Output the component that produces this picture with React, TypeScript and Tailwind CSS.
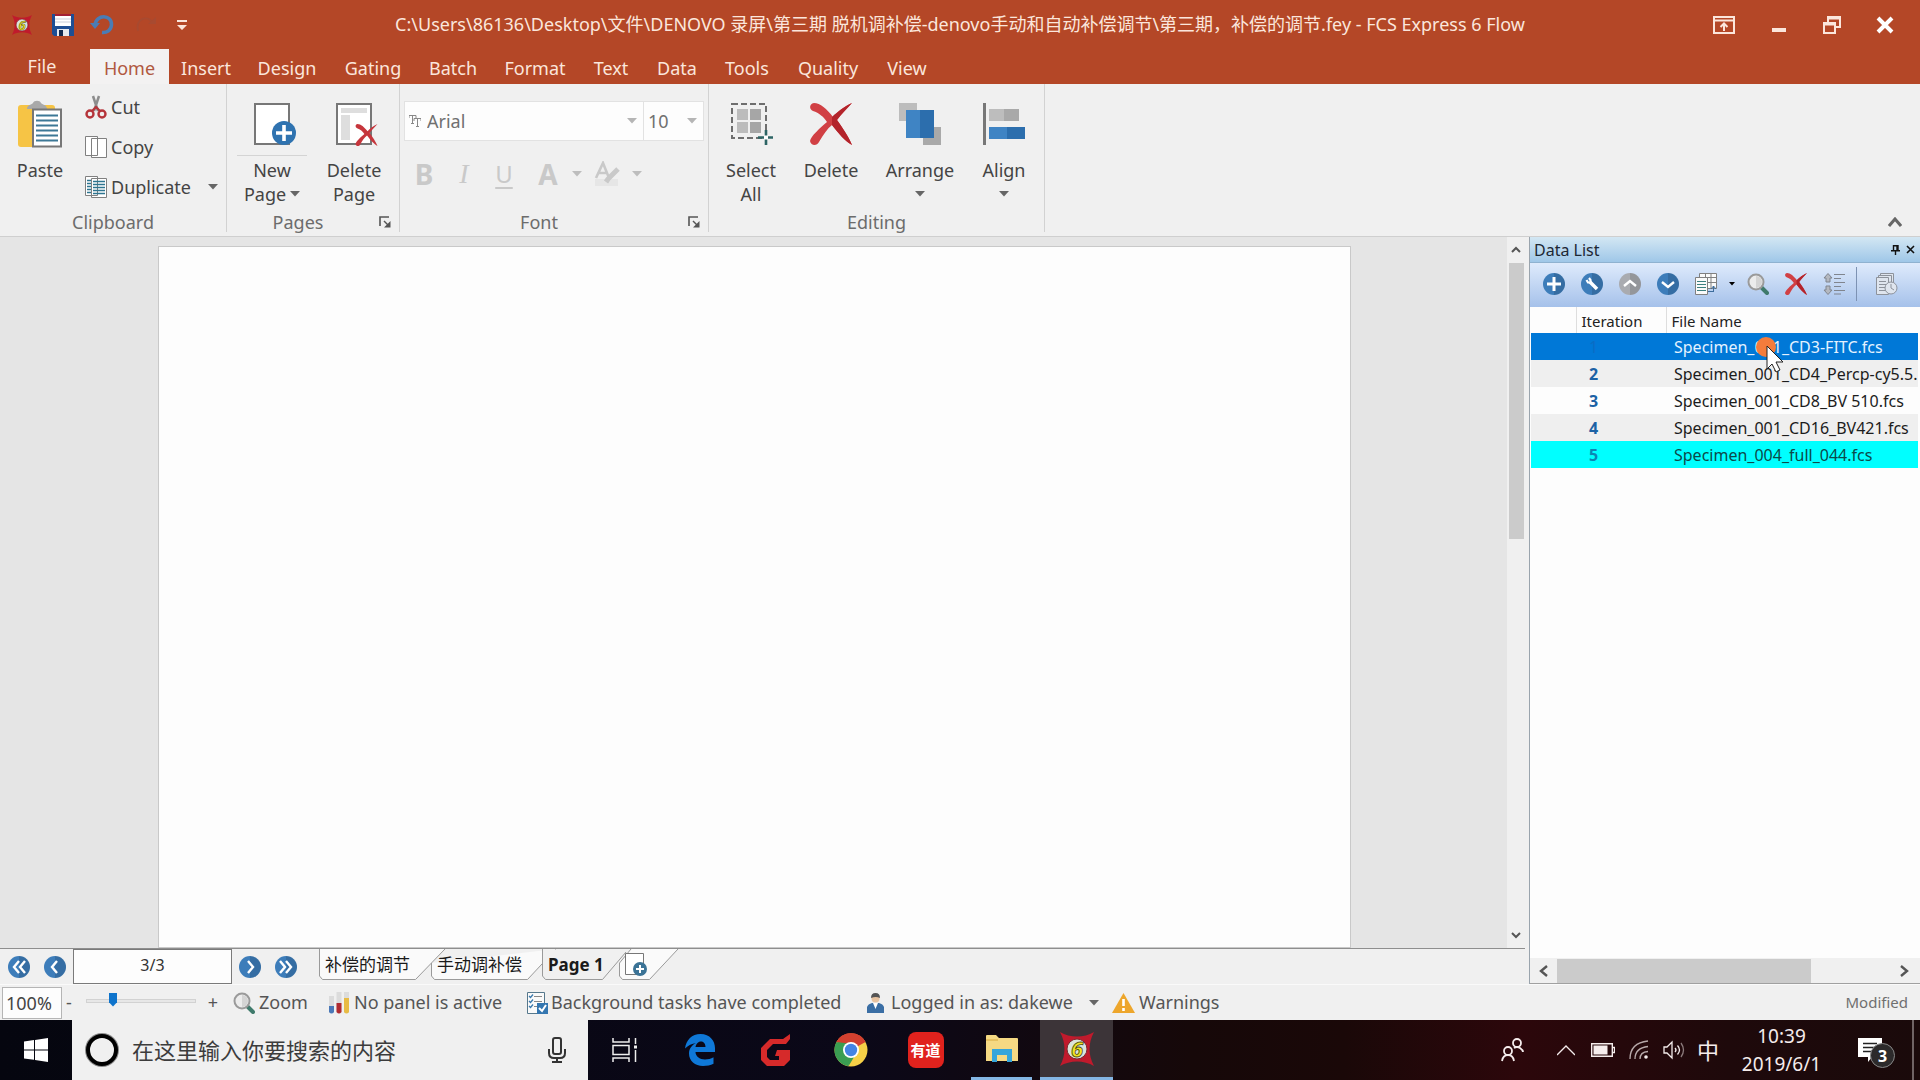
import React, { ReactNode } from 'react';

interface TabItem {
  label: string;
  width: string;
}

interface FileRow {
  iteration: number;
  name: string;
  row: string;
  number: string;
}

const ribbonTabs: TabItem[] = [
  { label: 'Home', width: 'w-[79px]' },
  { label: 'Insert', width: 'w-[74px]' },
  { label: 'Design', width: 'w-[88px]' },
  { label: 'Gating', width: 'w-[84px]' },
  { label: 'Batch', width: 'w-[76px]' },
  { label: 'Format', width: 'w-[88px]' },
  { label: 'Text', width: 'w-[64px]' },
  { label: 'Data', width: 'w-[68px]' },
  { label: 'Tools', width: 'w-[72px]' },
  { label: 'Quality', width: 'w-[90px]' },
  { label: 'View', width: 'w-[68px]' },
];

const files: FileRow[] = [
  { iteration: 1, name: 'Specimen_001_CD3-FITC.fcs', row: 'bg-[#0078d7] text-[#e4f2ff]', number: 'text-[#0a6cc4] font-normal' },
  { iteration: 2, name: 'Specimen_001_CD4_Percp-cy5.5.', row: 'bg-[#efefef] text-[#1c1c1c]', number: 'text-[#1c62a5] font-bold' },
  { iteration: 3, name: 'Specimen_001_CD8_BV 510.fcs', row: 'bg-[#fdfdfd] text-[#1c1c1c]', number: 'text-[#1c62a5] font-bold' },
  { iteration: 4, name: 'Specimen_001_CD16_BV421.fcs', row: 'bg-[#efefef] text-[#1c1c1c]', number: 'text-[#1c62a5] font-bold' },
  { iteration: 5, name: 'Specimen_004_full_044.fcs', row: 'bg-[#00ffff] text-[#0c4a4a]', number: 'text-[#0c86b4] font-bold' },
];

/* ---------- small shared pieces ---------- */

const Caret = ({ className = 'text-[#666]' }: { className?: string }) => (
  <svg className={className} width="10" height="6" viewBox="0 0 10 6" fill="currentColor">
    <path d="M0 0h10L5 5.5z" />
  </svg>
);

const Launcher = () => (
  <button aria-label="More options" className="text-[#555]">
    <svg width="12" height="12" viewBox="0 0 12 12">
      <path d="M1 10V1h9" fill="none" stroke="currentColor" strokeWidth="1.6" />
      <path d="M5 5l4 4" stroke="currentColor" strokeWidth="1.5" />
      <path d="M11.500 5v6.500H5z" fill="currentColor" />
    </svg>
  </button>
);

const Disc = ({ size = 22, color = '#3d7dba', children }: { size?: number; color?: string; children: ReactNode }) => (
  <svg width={size} height={size} viewBox="0 0 22 22">
    <circle cx="11" cy="11" r="11" fill={color} />
    <path d="M11 0a11 11 0 0 1 0 22z" fill="#000" opacity="0.12" />
    <g fill="none" stroke="#fff" strokeWidth="2.400">
      {children}
    </g>
  </svg>
);

const RedCross = ({ size }: { size: number }) => (
  <svg width={size} height={size} viewBox="0 0 42 42">
    <path
      d="M42 0C35 3 27 9 23 14C17 6 10 0 4 0C-1 1-1 6 3 8C9 10 14 14 17 19C10 25 1 33 0 38C1 43 7 43 9 39C13 32 17 26 22 22C28 30 36 39 42 42C39 34 32 24 27 17C31 11 37 6 42 0z"
      fill="#d14044"
    />
    <path d="M42 0C35 3 27 9 22 14v8C28 30 36 39 42 42C39 34 32 24 27 17C31 11 37 6 42 0z" fill="#b3242b" />
  </svg>
);

const AppLogo = ({ className }: { className: string }) => (
  <svg className={className} viewBox="0 0 34 34">
    <path d="M0 0C10 6 24 6 34 0C28 11 28 23 34 34C24 28 10 28 0 34C6 23 6 11 0 0z" fill="#c01a2c" />
    <circle cx="17" cy="17" r="10" fill="#d9e4dc" stroke="#7c2a30" strokeWidth="1" />
    <text x="17" y="25" textAnchor="middle" fontSize="22" fontStyle="italic" fontWeight="700" fill="#f3e321" stroke="#4a4a10" strokeWidth="0.8">
      6
    </text>
  </svg>
);

const Magnifier = () => (
  <svg width="22" height="22" viewBox="0 0 22 22">
    <path d="M14 14l6 6" stroke="#3f7a6b" strokeWidth="4" strokeLinecap="round" />
    <circle cx="9" cy="9" r="7.500" fill="#ececec" stroke="#9a9a9a" strokeWidth="2" />
    <path d="M9 3a6 6 0 0 1 0 12z" fill="#d4d4d4" />
  </svg>
);

/* ---------- title bar and tabs ---------- */

const TitleBar = () => (
  <div className="flex h-[49px] items-center text-[#fbe6dc]">
    <div className="flex w-[220px] items-center pl-3">
      <AppLogo className="mr-5 h-5 w-5" />
      <button aria-label="Save" className="mr-4">
        <svg width="22" height="22" viewBox="0 0 22 22">
          <path d="M0 0h22v22H2l-2-2z" fill="#1d4e94" />
          <path d="M3 0h16v12H3z" fill="#fff" />
          <path d="M3 0h16v2H3z" fill="#a32034" />
          <path d="M3 5h16M3 8h16" stroke="#c9cfda" />
          <path d="M5 15h12v7H5z" fill="#e6e9ee" />
          <path d="M7 16h4v6H7z" fill="#12294e" />
        </svg>
      </button>
      <button aria-label="Undo" className="mr-5">
        <svg width="24" height="22" viewBox="0 0 24 22" fill="none" stroke="#4a7cb5" strokeWidth="3.500">
          <path d="M5 11C6 0 22 0 21.500 11C21 16 17 19 12 18.500" />
          <path d="M0 9h10l-5 6z" fill="#4a7cb5" stroke="none" />
        </svg>
      </button>
      <button aria-label="Redo" className="mr-[19px]">
        <svg width="24" height="22" viewBox="0 0 24 22" fill="none" stroke="#a84a30" strokeWidth="2">
          <path d="M4 17C1 5 13 0 19 9" />
          <path d="M14 10h8l0-7z" fill="#a84a30" stroke="none" />
        </svg>
      </button>
      <button aria-label="Customize toolbar">
        <svg width="10" height="12" viewBox="0 0 10 12" fill="currentColor">
          <path d="M0 1h10v2H0zM0 6h10l-5 5z" />
        </svg>
      </button>
    </div>
    <h1 className="flex-1 truncate text-center text-[18px]">
      C:\Users\86136\Desktop\文件\DENOVO 录屏\第三期 脱机调补偿-denovo手动和自动补偿调节\第三期，补偿的调节.fey - FCS Express 6 Flow
    </h1>
    <div className="flex w-[220px] items-center justify-end gap-[35px] pr-[26px]">
      <button aria-label="Ribbon display options">
        <svg width="22" height="18" viewBox="0 0 22 18" fill="none" stroke="currentColor" strokeWidth="2">
          <path d="M1 1h20v16H1zM1 4.500h20M11 15V8M7.500 11L11 7.500l3.500 3.500" />
        </svg>
      </button>
      <button aria-label="Minimize">
        <svg width="18" height="18" viewBox="0 0 18 18">
          <path d="M2 12h14v4H2z" fill="currentColor" />
        </svg>
      </button>
      <button aria-label="Restore">
        <svg width="18" height="18" viewBox="0 0 18 18" fill="none" stroke="currentColor" strokeWidth="2">
          <path d="M1 7h11v10H1zM1 8.500h11M5 6V1h12v10h-4M5 2.500h12" />
        </svg>
      </button>
      <button aria-label="Close">
        <svg width="18" height="18" viewBox="0 0 18 18" stroke="#fff" strokeWidth="4">
          <path d="M2 2l14 14M16 2L2 16" />
        </svg>
      </button>
    </div>
  </div>
);

const RibbonTabs = () => (
  <nav className="flex h-[35px] items-stretch text-[18px] text-[#fbe6dc]">
    <button className="w-[90px] pb-px pr-[6px]">File</button>
    {ribbonTabs.map((tab, i) => (
      <button key={tab.label} className={`pt-1 ${tab.width} ${i === 0 ? 'bg-[#f3f2f2] text-[#b05840]' : ''}`}>
        {tab.label}
      </button>
    ))}
  </nav>
);

/* ---------- ribbon ---------- */

const RibbonGroup = ({ title, className, launcher, children }: { title: string; className: string; launcher?: boolean; children: ReactNode }) => (
  <section className={`flex h-[148px] flex-col border-r border-[#d2d2d2] ${className}`}>
    <div className="flex h-[128px]">{children}</div>
    <div className="relative flex h-5 items-center justify-center text-[18px] text-[#6c6c6c]">
      {title}
      {launcher && (
        <div className="absolute right-2 top-1 flex">
          <Launcher />
        </div>
      )}
    </div>
  </section>
);

const BigButton = ({ icon, width, children }: { icon: ReactNode; width: string; children: ReactNode }) => (
  <button className={`flex flex-col items-center pt-[18px] leading-6 ${width}`}>
    <span className="mb-[12px] flex h-[44px] items-center">{icon}</span>
    {children}
  </button>
);

const SmallButton = ({ icon, label, caret }: { icon: ReactNode; label: string; caret?: boolean }) => (
  <button className="flex h-10 items-center">
    <span className="mr-1 flex w-[22px] justify-center">{icon}</span>
    {label}
    {caret && (
      <span className="ml-[17px]">
        <Caret />
      </span>
    )}
  </button>
);

const Ribbon = () => (
  <div className="relative flex h-[153px] border-b border-[#cfcfcf] bg-[#f0f0f0] text-[18px] text-[#444]">
    <RibbonGroup title="Clipboard" className="w-[227px]">
      <BigButton
        width="w-[80px]"
        icon={
          <svg width="46" height="48" viewBox="0 0 46 48">
            <rect x="1" y="5" width="37" height="42" rx="3" fill="#f6c445" />
            <path d="M10 9c0-4 4-4 6-6c1-3 7-3 8 0c2 2 6 2 6 6z" fill="#a9a9a9" />
            <path d="M16 9.500h28v37H16z" fill="#fff" stroke="#777" strokeWidth="2" />
            <path d="M19 15.500h22M19 20.500h22M19 25.500h22M19 30.500h22M19 35.500h22M19 40.500h22" stroke="#3d7896" strokeWidth="2" />
          </svg>
        }
      >
        Paste
      </BigButton>
      <div className="flex flex-col items-start pl-[5px] pt-[3px]">
        <SmallButton
          label="Cut"
          icon={
            <svg width="22" height="24" viewBox="0 0 22 24" fill="none">
              <path d="M8 1l5 15M14 1L9 16" stroke="#8d8d8d" strokeWidth="2.500" />
              <circle cx="5" cy="19" r="3.500" stroke="#b5343a" strokeWidth="2.400" />
              <circle cx="17" cy="19" r="3.500" stroke="#b5343a" strokeWidth="2.400" />
              <path d="M7 16l4-4l4 4" stroke="#b5343a" strokeWidth="2.200" />
            </svg>
          }
        />
        <SmallButton
          label="Copy"
          icon={
            <svg width="22" height="22" viewBox="0 0 22 22" fill="#fff" stroke="#808080">
              <path d="M.5.5h12v19H.5zM6.500 2.500h15v19h-15z" />
            </svg>
          }
        />
        <SmallButton
          label="Duplicate"
          caret
          icon={
            <svg width="22" height="22" viewBox="0 0 22 22" fill="#fff" stroke="#808080">
              <path d="M.5.5h12v19H.5zM6.500 2.500h15v19h-15z" />
              <path d="M2 4.500h4M2 7.500h4M2 10.500h4M2 13.500h4M2 16.500h4M8 5.500h12M8 8.500h12M8 11.500h12M8 14.500h12M8 17.500h12" stroke="#2e7590" strokeWidth="1.300" />
            </svg>
          }
        />
      </div>
    </RibbonGroup>

    <RibbonGroup title="Pages" className="w-[173px] [&>div:last-child]:pr-[30px]" launcher>
      <BigButton
        width="w-[90px]"
        icon={
          <svg className="ml-[7px]" width="43" height="44" viewBox="0 0 43 44">
            <path d="M1 2h34v40H1z" fill="#fff" stroke="#777" strokeWidth="2" />
            <circle cx="30" cy="31" r="12" fill="#2f73b0" />
            <path d="M30 23v16M22 31h16" stroke="#fff" strokeWidth="3.600" />
          </svg>
        }
      >
        <span className="-mt-[3px] mb-[2px] h-px w-[70px] bg-[#d4d4d4]" />
        <span>New</span>
        <span className="flex items-center gap-1">
          Page <Caret />
        </span>
      </BigButton>
      <BigButton
        width="w-[74px]"
        icon={
          <svg className="ml-[6px]" width="42" height="44" viewBox="0 0 42 44">
            <path d="M1 2h34v40H1z" fill="#fff" stroke="#777" strokeWidth="2" />
            <path d="M5 6h26v5H5zM5 13h9v25H5z" fill="#dedede" />
            <svg x="19" y="22" width="23" height="22" viewBox="0 0 42 42">
              <path d="M42 0C35 3 27 9 23 14C17 6 10 0 4 0C-1 1-1 6 3 8C9 10 14 14 17 19C10 25 1 33 0 38C1 43 7 43 9 39C13 32 17 26 22 22C28 30 36 39 42 42C39 34 32 24 27 17C31 11 37 6 42 0z" fill="#c6363c" />
            </svg>
          </svg>
        }
      >
        <span>Delete</span>
        <span>Page</span>
      </BigButton>
    </RibbonGroup>

    <RibbonGroup title="Font" className="w-[309px] [&>div:last-child]:pr-[30px]" launcher>
      <div className="w-full pl-1 pr-1 pt-[17px] text-[#707070]">
        <div className="flex h-10">
          <label className="flex w-[240px] items-center border border-[#e2e2e2] bg-[#fdfdfd] pl-1">
            <svg width="12" height="12" viewBox="0 0 12 12" fill="none" stroke="#888">
              <path d="M0 3V.5h7V3M3.500.5v8M2 8.500h3M5 6V3.500h7V6M8.500 3.500v8M7 11.500h3" />
            </svg>
            <select aria-label="Font name" className="flex-1 appearance-none bg-transparent pl-[6px]">
              <option>Arial</option>
            </select>
            <Caret className="mr-[6px] text-[#b5b5b5]" />
          </label>
          <label className="-ml-px flex w-[61px] items-center border border-[#e2e2e2] bg-[#fdfdfd]">
            <select aria-label="Font size" className="flex-1 appearance-none bg-transparent pl-1">
              <option>10</option>
            </select>
            <Caret className="mr-[6px] text-[#b5b5b5]" />
          </label>
        </div>
        <div className="flex h-[66px] items-center pl-[8px] text-[28px] text-[#c9c9c9]">
          <button className="w-[24px] font-bold">B</button>
          <button className="ml-4 w-[24px] font-[family-name:'Liberation_Serif',serif] italic">I</button>
          <button className="ml-4 w-[24px] text-[24px] underline underline-offset-4">U</button>
          <button className="ml-5 w-[24px] font-bold">A</button>
          <Caret className="ml-[12px] text-[#bdbdbd]" />
          <button aria-label="Highlight" className="ml-[12px]">
            <svg width="26" height="26" viewBox="0 0 26 26" fill="none" stroke="#c9c9c9">
              <path d="M2 17L9 2l6 15M4.500 12h9" strokeWidth="2.600" />
              <path d="M1 18h23v7H1z" fill="#e6e6e6" stroke="none" />
              <path d="M24 8L14 18l-2 3" strokeWidth="5" />
            </svg>
          </button>
          <Caret className="ml-[12px] text-[#bdbdbd]" />
        </div>
      </div>
    </RibbonGroup>

    <RibbonGroup title="Editing" className="w-[336px]">
      <BigButton
        width="w-[84px]"
        icon={
          <svg className="ml-[2px]" width="42" height="42" viewBox="0 0 42 42">
            <path d="M1 1h34v34H1z" fill="none" stroke="#6e6e6e" strokeWidth="2" strokeDasharray="6 3" />
            <path d="M6 6h11v11H6zM6 19h11v11H6z" fill="#bcbcbc" />
            <path d="M19 6h11v11H19zM19 19h11v11H19z" fill="#a6a6a6" />
            <path d="M35 27v15M27 34.500h15" stroke="#2c6464" strokeWidth="2.600" />
            <path d="M33 32.500h4v4h-4z" fill="#fff" />
          </svg>
        }
      >
        <span>Select</span>
        <span>All</span>
      </BigButton>
      <BigButton width="w-[76px]" icon={<RedCross size={42} />}>
        Delete
      </BigButton>
      <BigButton
        width="w-[102px]"
        icon={
          <svg width="42" height="42" viewBox="0 0 42 42">
            <path d="M0 0h18v18H0z" fill="#bdbdbd" />
            <path d="M24 24h18v18H24z" fill="#a9a9a9" />
            <path d="M7 7h28v28H7z" fill="#3f84c4" />
            <path d="M21 7h14v28H21z" fill="#2c6ead" />
          </svg>
        }
      >
        <span className="mb-[9px]">Arrange</span>
        <Caret />
      </BigButton>
      <BigButton
        width="w-[66px]"
        icon={
          <svg width="42" height="42" viewBox="0 0 42 42">
            <path d="M0 0h3v42H0z" fill="#777" />
            <path d="M6 6h30v12H6z" fill="#bdbdbd" />
            <path d="M21 6h15v12H21z" fill="#a9a9a9" />
            <path d="M6 24h36v12H6z" fill="#3f84c4" />
            <path d="M24 24h18v12H24z" fill="#2c6ead" />
          </svg>
        }
      >
        <span className="mb-[9px]">Align</span>
        <Caret />
      </BigButton>
    </RibbonGroup>

    <div className="flex flex-1 items-end justify-end pb-[9px] pr-[18px]">
      <button aria-label="Collapse ribbon">
        <svg width="14" height="10" viewBox="0 0 14 10" fill="none" stroke="#666" strokeWidth="3">
          <path d="M1 9l6-7l6 7" />
        </svg>
      </button>
    </div>
  </div>
);

/* ---------- page area ---------- */

const Chevron = ({ d }: { d: string }) => (
  <svg width="10" height="10" viewBox="0 0 10 10" fill="none" stroke="#555" strokeWidth="2">
    <path d={d} />
  </svg>
);

const Workspace = () => (
  <div className="flex min-h-0 flex-1 bg-[#e5e5e5]">
    <div className="flex flex-1 justify-center overflow-hidden pt-[9px]">
      <div className="ml-[2px] w-[79.1%] border border-[#c9c9c9] bg-[#fdfdfd]" />
    </div>
    <div className="flex w-[18px] flex-col items-center bg-[#f0f0f0]">
      <button aria-label="Scroll up" className="flex h-[26px] items-center">
        <Chevron d="M1 7l4-4l4 4" />
      </button>
      <div className="h-[276px] w-[15px] bg-[#cbcbcb]" />
      <button aria-label="Scroll down" className="mt-auto flex h-[26px] items-center">
        <Chevron d="M1 3l4 4l4-4" />
      </button>
    </div>
  </div>
);

const PageTab = ({ label, width, path, active }: { label: string; width: string; path: string; active?: boolean }) => (
  <button className={`relative h-[31px] ${width} pl-[6px] text-left text-[17px] leading-[28px] whitespace-nowrap text-[#1a1a1a] ${active ? 'font-bold' : ''}`}>
    <svg className="absolute left-0 top-0 overflow-visible" width="126" height="31" viewBox="0 0 126 31">
      <path d={path} fill={active ? '#f0f0f0' : '#fafafa'} stroke="#9a9a9a" />
    </svg>
    <span className="relative">{label}</span>
  </button>
);

const PageNav = () => (
  <div className="flex h-[36px] border-t border-[#8e8e8e] bg-[#f0f0f0]">
    <div className="flex items-center gap-[14px] pl-2">
      <button aria-label="First page"><Disc><path d="M11 5l-5 6l5 6M17 5l-5 6l5 6" /></Disc></button>
      <button aria-label="Previous page"><Disc><path d="M13 5l-5 6l5 6" /></Disc></button>
    </div>
    <input aria-label="Page" defaultValue="3/3" className="ml-[7px] w-[159px] border border-[#7a7a7a] bg-[#fdfdfd] pb-1 text-center text-[16px] text-[#333]" />
    <div className="flex items-center gap-[14px] pl-[7px]">
      <button aria-label="Next page"><Disc><path d="M9 5l5 6l-5 6" /></Disc></button>
      <button aria-label="Last page"><Disc><path d="M5 5l5 6l-5 6M11 5l5 6l-5 6" /></Disc></button>
    </div>
    <div className="ml-[22px] flex">
      <PageTab label="补偿的调节" width="w-[112px]" path="M.5 0v27l3 3.500h93L126 0" />
      <PageTab label="手动调补偿" width="w-[111px]" path="M.5 14v13l3 3.500h93L125 0" />
      <PageTab label="Page 1" width="w-[77px]" path="M.5 0v27l3 3.500h57L84 3" active />
      <button aria-label="Add page" className="relative h-[31px] w-[60px]">
        <svg className="overflow-visible" width="60" height="31" viewBox="0 0 60 31">
          <path d="M.5 14v13l3 3.500h27L59 0H12z" fill="#fafafa" stroke="none" />
          <path d="M12 0L.5 14v13l3 3.500h27L59 0" fill="none" stroke="#9a9a9a" />
          <path d="M6.500 4.500h18v21h-18z" fill="#fff" stroke="#777" />
          <circle cx="21" cy="20" r="7" fill="#3b7396" />
          <path d="M21 16v8M17 20h8" stroke="#fff" strokeWidth="2" />
        </svg>
      </button>
    </div>
  </div>
);

/* ---------- data list panel ---------- */

const DataList = () => (
  <aside className="flex w-[391px] flex-col border-l border-[#9aa4ad] bg-[#fdfdfd]">
    <header className="flex h-[26px] items-center justify-between border-b border-[#8fb2d0] bg-gradient-to-b from-[#d3e7f3] to-[#9fc7e8] pl-1 pr-[5px] text-[16px] text-[#1d2733]">
      Data List
      <span className="flex items-center gap-[6px]">
        <button aria-label="Pin">
          <svg width="9" height="10" viewBox="0 0 9 10" fill="none" stroke="#111" strokeWidth="1.400">
            <path d="M2.500 0v5.500M7 0v5.500M2 .7h5M0 5.800h9M4.500 6v4M6 0v6" />
          </svg>
        </button>
        <button aria-label="Close panel">
          <svg width="9" height="9" viewBox="0 0 9 9" stroke="#111" strokeWidth="1.600">
            <path d="M1 1l7 7M8 1L1 8" />
          </svg>
        </button>
      </span>
    </header>
    <div className="flex h-[44px] items-center gap-4 bg-gradient-to-b from-[#dfebfc] to-[#a5c1ea] pb-[2px] pl-[13px]">
      <button aria-label="Add"><Disc><path d="M11 4v14M4 11h14" strokeWidth="3" /></Disc></button>
      <button aria-label="Edit">
        <Disc>
          <path d="M9 9l7 7" strokeWidth="3.500" />
          <path d="M5.500 7l1.500 2.500h2.500V7L8 5" strokeWidth="2.200" />
        </Disc>
      </button>
      <button aria-label="Move up"><Disc color="#a9abb0"><path d="M5 13l6-5l6 5" /></Disc></button>
      <button aria-label="Move down"><Disc><path d="M5 9l6 5l6-5" /></Disc></button>
      <button aria-label="Change data">
        <svg width="22" height="22" viewBox="0 0 22 22" fill="#fafafa" stroke="#808080">
          <path d="M4.500.5h17v15h-17zM4 4.500h17M10.500 1v14M16 1v14M10 9.500h11" />
          <path d="M.5 4.500h12v17H.5z" />
          <path d="M2 8.500h9M2 11.500h9M2 14.500h9M2 17.500h9" stroke="#3d8080" />
          <path d="M13 18.500h5M18.500 13v6M16 16l2.500-3l2.500 3" stroke="#3c6c9c" fill="none" />
        </svg>
      </button>
      <svg className="-mx-1" width="6" height="4" viewBox="0 0 6 4"><path d="M0 0h6L3 3.500z" /></svg>
      <button aria-label="Search"><Magnifier /></button>
      <button aria-label="Remove"><RedCross size={22} /></button>
      <button aria-label="Sort">
        <svg width="22" height="22" viewBox="0 0 22 22" fill="#b4b8c0" stroke="#80858e">
          <path d="M5 .5L9 5H7v4H3V5H1zM5 21.500L9 17H7v-4H3v4H1z" />
          <path d="M11 1.500h11M11 5.500h7M11 9.500h11M11 13.500h7M11 17.500h11M11 21h7" />
        </svg>
      </button>
      <div className="-ml-[5px] h-[34px] w-px bg-[#7d92b3]" />
      <button aria-label="History" className="ml-[3px]">
        <svg width="22" height="22" viewBox="0 0 22 22" fill="#dfe5ee" stroke="#8d929b">
          <path d="M4.500.5h13v16h-13z" />
          <path d="M2.500 2.500h13v16h-13z" />
          <path d="M.5 4.500h12v17H.5zM3 8.500h7M3 11.500h7M3 14.500h7M3 17.500h7" />
          <circle cx="15" cy="15" r="6" />
          <path d="M15 11v4l3 2" fill="none" />
        </svg>
      </button>
    </div>
    <div className="min-h-0 flex-1 overflow-hidden pl-px pr-[2px]">
      <table className="w-full table-fixed border-collapse text-[16px]">
        <thead>
          <tr className="h-[26px] text-left text-[15px] text-[#222]">
            <th className="w-[45px] border-r border-[#dedede]" />
            <th className="w-[90px] border-r border-[#dedede] pl-[5px] pt-[2px] font-normal">Iteration</th>
            <th className="pl-[5px] pt-[2px] font-normal">File Name</th>
          </tr>
        </thead>
        <tbody>
          {files.map((file) => (
            <tr key={file.iteration} className={`h-[27px] ${file.row}`}>
              <td />
              <td className={`pl-[13px] ${file.number}`}>{file.iteration}</td>
              <td className="relative overflow-visible whitespace-nowrap pl-[8px]">
                {file.name}
                {file.iteration === 1 && (
                  <svg className="absolute left-[90px] top-[4px] z-10" width="30" height="38" viewBox="0 0 30 38">
                    <circle cx="10" cy="10" r="10" fill="#f47c3c" />
                    <path d="M11 9v23l5-5l4 8l4-2l-4-8h7z" fill="#fff" stroke="#222" strokeWidth="1" />
                  </svg>
                )}
              </td>
            </tr>
          ))}
        </tbody>
      </table>
    </div>
    <div className="flex h-[26px] items-center border-b border-[#a0a0a0] bg-[#f0f0f0]">
      <button aria-label="Scroll left" className="flex w-[27px] justify-center">
        <svg width="10" height="12" viewBox="0 0 10 12" fill="none" stroke="#555" strokeWidth="2.400"><path d="M8 1L2 6l6 5" /></svg>
      </button>
      <div className="h-[24px] w-[254px] bg-[#cbcbcb]" />
      <button aria-label="Scroll right" className="ml-auto mr-[11px]">
        <svg width="10" height="12" viewBox="0 0 10 12" fill="none" stroke="#555" strokeWidth="2.400"><path d="M2 1l6 5l-6 5" /></svg>
      </button>
    </div>
  </aside>
);

/* ---------- status bar ---------- */

const StatusBar = () => (
  <footer className="flex h-9 items-center border-t border-[#fafafa] bg-[#f0f0f0] pr-3 text-[18px] text-[#555]">
    <input aria-label="Zoom level" defaultValue="100%" className="ml-[2px] h-[32px] w-[60px] border border-[#b5b5b5] bg-[#fdfdfd] pl-[3px] text-[#444]" />
    <button className="w-[14px]">-</button>
    <input
      type="range"
      aria-label="Zoom slider"
      defaultValue={22}
      className="mb-1 ml-[10px] h-4 w-[110px] appearance-none bg-transparent [&::-webkit-slider-runnable-track]:h-1 [&::-webkit-slider-runnable-track]:border [&::-webkit-slider-runnable-track]:border-[#d2d2d2] [&::-webkit-slider-runnable-track]:bg-[#e7e7e7] [&::-webkit-slider-thumb]:-mt-[7px] [&::-webkit-slider-thumb]:h-[14px] [&::-webkit-slider-thumb]:w-[8px] [&::-webkit-slider-thumb]:appearance-none [&::-webkit-slider-thumb]:bg-[#0e74cc] [&::-webkit-slider-thumb]:[clip-path:polygon(0_0,100%_0,100%_70%,50%_100%,0_70%)]"
    />
    <button className="ml-[10px] w-[14px]">+</button>
    <button className="ml-[13px] flex items-center gap-1">
      <Magnifier />
      <span className="w-[70px] text-left">Zoom</span>
    </button>
    <div className="flex w-[198px] items-center gap-[5px]">
      <svg width="20" height="22" viewBox="0 0 20 22">
        <path d="M0 4h5v17H0zM7.500 0h5v21h-5zM15 0h5v21h-5z" fill="#dcdcdc" />
        <path d="M0 14h5v6q-2.500 3-5 0z" fill="#4a78b8" />
        <path d="M7.500 11h5v9q-2.500 3-5 0z" fill="#b02a30" />
        <path d="M15 6h5v14q-2.500 3-5 0z" fill="#e8bb45" />
      </svg>
      No panel is active
    </div>
    <div className="flex w-[340px] items-center gap-[3px] whitespace-nowrap">
      <svg width="21" height="22" viewBox="0 0 21 22">
        <path d="M.5.5h17v21H.5z" fill="#fafafa" stroke="#56788c" />
        <path d="M7 4.500h8M7 9.500h8M7 14.500h4" stroke="#888" />
        <path d="M2 4l1.500 1.500L6 2.500M2 9l1.500 1.500L6 7.500M2 14l1.500 1.500L6 12.500" fill="none" stroke="#3a78ac" strokeWidth="1.300" />
        <path d="M10 11h11v11H10z" fill="#3476b0" />
        <path d="M12 16l3 3l4-6" fill="none" stroke="#fff" strokeWidth="2" />
      </svg>
      Background tasks have completed
    </div>
    <button className="flex w-[245px] items-center">
      <svg className="mr-[7px]" width="17" height="20" viewBox="0 0 17 20">
        <path d="M0 20v-6q1-3 5-4h7q4 1 5 4v6z" fill="#3a6ea4" />
        <path d="M6 10h5l-2.500 6z" fill="#fff" />
        <circle cx="8.500" cy="5.500" r="4" fill="#e8c3a0" />
        <path d="M4 5q0-5 4.500-5T13 5q-4-2-9 0z" fill="#555" />
      </svg>
      Logged in as: dakewe
      <span className="ml-4"><Caret /></span>
    </button>
    <button className="flex items-center gap-1">
      <svg width="23" height="20" viewBox="0 0 23 20">
        <path d="M11.500 0L23 20H0z" fill="#eda62c" />
        <path d="M11.500 6v7M11.500 15v3" stroke="#fff" strokeWidth="2.600" />
      </svg>
      Warnings
    </button>
    <span className="ml-auto text-[15px] text-[#6f6f6f]">Modified</span>
  </footer>
);

/* ---------- windows taskbar ---------- */

const TaskIcon = ({ label, children, className = 'w-[75px]' }: { label: string; children: ReactNode; className?: string }) => (
  <button aria-label={label} className={`flex h-full items-center justify-center ${className}`}>
    {children}
  </button>
);

const Taskbar = () => (
  <div className="flex h-[60px] items-center bg-[linear-gradient(90deg,#05060f_0%,#0b0818_45%,#160809_62%,#1a0808_70%,#2c070b_79%,#1e090b_90%,#1a0a0b_100%)] text-[#f5ecec]">
    <button aria-label="Start" className="flex h-full w-[72px] items-center justify-center">
      <svg width="24" height="24" viewBox="0 0 24 24" fill="#fff">
        <path d="M0 3.500l10-1.400v9.300H0zM11 2l13-2v11.400H11zM0 12.500h10v9.300L0 20.500zM11 12.500h13V24l-13-2z" />
      </svg>
    </button>
    <label className="flex h-full w-[516px] items-center bg-[#f0f0f0] pl-[13px] pr-[22px]">
      <svg width="34" height="34" viewBox="0 0 34 34" fill="none">
        <circle cx="17" cy="17" r="15" stroke="#8a8a8a" strokeWidth="4" />
        <circle cx="17" cy="17" r="14" stroke="#000" strokeWidth="4" />
      </svg>
      <input
        aria-label="Search"
        placeholder="在这里输入你要搜索的内容"
        className="ml-[13px] min-w-0 flex-1 bg-transparent text-[22px] placeholder:text-[#3c3c3c]"
      />
      <svg width="18" height="26" viewBox="0 0 18 26" fill="none" stroke="#333" strokeWidth="2">
        <rect x="5" y="1" width="8" height="16" rx="2" />
        <path d="M1 12v4q0 5 5 5h6q5 0 5-5v-4M9 21v4M4 25h10" />
      </svg>
    </label>
    <TaskIcon label="Task view" className="w-[73px]">
      <svg width="26" height="24" viewBox="0 0 26 24" fill="none" stroke="#eee" strokeWidth="1.500">
        <path d="M1 0v4h16V0M1 7.500h16v9H1zM1 24v-4h16v4M23.500 0v6M23.500 12v12" />
        <path d="M22 7.500h3v3h-3z" fill="#eee" stroke="none" />
      </svg>
    </TaskIcon>
    <TaskIcon label="Edge" className="w-[77px]">
      <svg width="30" height="32" viewBox="0 0 30 32" fill="#0f78d7">
        <path d="M0 14.500C1 6 7 0 15.500 0C25 0 30 7 30 14v4H10.500c0 4 4 7.500 9.500 7.500c3 0 6-1 8.500-2.300v6.500C25.500 31 22 32 18 32C10 32 4 27 4 19.500C4 14.500 7 11 11 9C7 9.500 3 11.500 0 14.500zM10.500 13h10c0-3-1.500-5.500-4.500-5.500S11 10 10.500 13z" />
      </svg>
    </TaskIcon>
    <TaskIcon label="Game center">
      <svg width="32" height="32" viewBox="0 0 32 32">
        <path d="M30 0v5l-4 5H13l-6 6v7l3 3h9v-4h-4l2-6h13v10l-6 6H7l-6-6V14l9-9h13z" fill="#d62a2a" />
      </svg>
    </TaskIcon>
    <TaskIcon label="Chrome">
      <svg width="34" height="34" viewBox="0 0 34 34">
        <circle cx="17" cy="17" r="16.500" fill="#f6d047" />
        <path d="M17 17L2.500 9A16.500 16.500 0 0 0 14.500 33.300z" fill="#3a9d52" />
        <path d="M17 17L2.500 9a16.500 16.500 0 0 1 29 0z" fill="#d3402f" />
        <path d="M3 9l7 12l7-10zM14.500 33.300L23 19l-9 4z" fill="#3a9d52" />
        <path d="M2.500 9A16.500 16.500 0 0 1 31.500 9H17z" fill="#d3402f" />
        <circle cx="17" cy="17" r="8" fill="#fff" />
        <circle cx="17" cy="17" r="6.200" fill="#4484e4" />
      </svg>
    </TaskIcon>
    <TaskIcon label="Youdao">
      <span className="flex h-9 w-9 items-center justify-center rounded-lg bg-[#e0221d] text-[15px] font-bold text-white">有道</span>
    </TaskIcon>
    <TaskIcon label="File Explorer" className="w-[77px] px-2 [&>span]:border-b-[3px] [&>span]:border-[#84b6e4]">
      <span className="flex h-full w-full items-center justify-center">
        <svg width="32" height="27" viewBox="0 0 32 27">
          <path d="M0 1q0-1 1-1h9l3 3h18q1 0 1 1v22H0z" fill="#f5d983" />
          <path d="M0 5h12" stroke="#d7a93e" />
          <path d="M6 14h20v13h-5v-7h-10v7H6z" fill="#35a5da" />
        </svg>
      </span>
    </TaskIcon>
    <TaskIcon label="FCS Express" className="w-[73px] border-b-[3px] border-[#84b6e4] bg-[#3c3438]">
      <AppLogo className="h-[34px] w-[34px]" />
    </TaskIcon>

    <div className="ml-auto flex h-full items-center">
      <button aria-label="People" className="mr-8">
        <svg width="24" height="24" viewBox="0 0 24 24" fill="none" stroke="currentColor" strokeWidth="1.800">
          <circle cx="7" cy="13" r="4" />
          <path d="M1 23q1-6 6-6t6 6" />
          <circle cx="16" cy="5" r="4" />
          <path d="M13 10q3-2 6 0t3 4" />
        </svg>
      </button>
      <button aria-label="Show hidden icons" className="mr-4">
        <svg width="18" height="11" viewBox="0 0 18 11" fill="none" stroke="currentColor" strokeWidth="1.400">
          <path d="M0 10l9-9l9 9" />
        </svg>
      </button>
      <svg className="mr-[14px]" width="24" height="14" viewBox="0 0 24 14">
        <path d="M.7.700h20.600v12.600H.7zM22 4.500h1.500v5H22" fill="none" stroke="currentColor" strokeWidth="1.400" />
        <path d="M2.500 2.500h14v9h-14z" fill="currentColor" />
      </svg>
      <svg className="mr-[14px]" width="20" height="20" viewBox="0 0 20 20" fill="none" stroke="currentColor" strokeWidth="1.300">
        <path d="M1 19Q1 3 19 1M6 19Q6 8 19 6.500M11 19Q11 12 19 11.500" opacity="0.700" />
        <circle cx="17" cy="17" r="1.800" fill="currentColor" stroke="none" />
      </svg>
      <svg className="mr-[12px]" width="22" height="20" viewBox="0 0 22 20" fill="none" stroke="currentColor" strokeWidth="1.300">
        <path d="M1 7h3l5-5v16l-5-5H1zM12 8q2 2 0 4M14.500 5.500q4 4.500 0 9" />
        <path d="M18 3q5 7 0 14" opacity="0.500" />
      </svg>
      <span className="text-[22px] leading-none">中</span>
      <div className="w-[125px] text-center text-[19px] leading-7">
        <div>10:39</div>
        <div>2019/6/1</div>
      </div>
      <button aria-label="Notifications" className="relative ml-[14px] h-[36px] w-[37px]">
        <svg width="24" height="24" viewBox="0 0 24 24">
          <path d="M0 0h24v19H14l-4 5v-5H0z" fill="#fff" />
          <path d="M5 5.500h14M5 9.500h14M5 13.500h9" stroke="#222" strokeWidth="1.400" />
        </svg>
        <span className="absolute bottom-0 right-0 flex h-[25px] w-[25px] items-center justify-center rounded-full border border-[#888] bg-[#2c2a2b] text-[16px] font-bold text-white">3</span>
      </button>
      <div className="ml-[17px] mr-[6px] h-full w-[2px] bg-[#6f6465]" />
    </div>
  </div>
);

const App = () => {
  return (
    <div className="flex h-screen flex-col overflow-hidden bg-[#f0f0f0] font-[family-name:'Noto_Sans','Noto_Sans_CJK_SC',sans-serif]">
      <div className="bg-[#b44727]">
        <TitleBar />
        <RibbonTabs />
      </div>
      <Ribbon />
      <main className="flex min-h-0 flex-1">
        <div className="mr-1 flex min-w-0 flex-1 flex-col">
          <Workspace />
          <PageNav />
        </div>
        <DataList />
      </main>
      <StatusBar />
      <Taskbar />
    </div>
  );
};

export default App;
